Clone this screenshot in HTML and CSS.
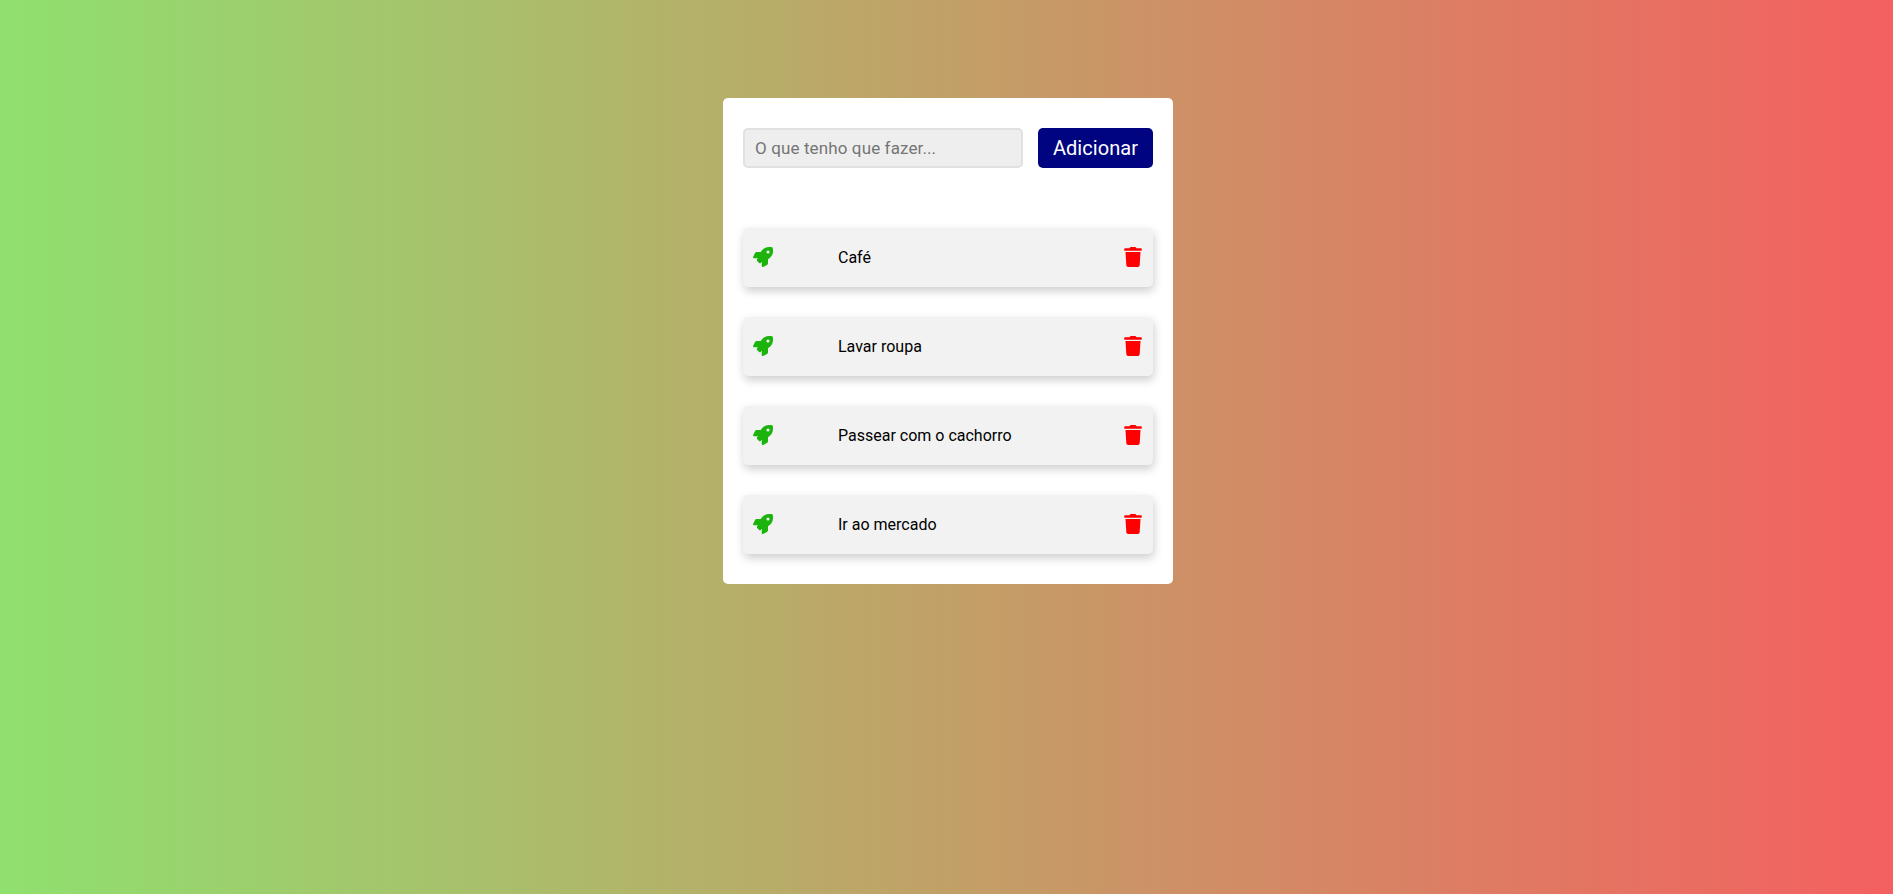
FILE: index.html
```html
<!DOCTYPE html>
<html lang="pt-BR">
<head>
<meta charset="utf-8">
<title>Lista de tarefas</title>
<link rel="stylesheet" href="styles.css">
</head>
<body>
<svg class="sprite" aria-hidden="true">
  <symbol id="rocket" viewBox="0 0 512 512"><path d="M505.12019,19.09375c-1.18945-5.53125-6.65819-11-12.207-12.1875C460.716,0,435.507,0,410.40747,0,307.17523,0,245.26909,55.20312,199.05238,128H94.83772c-16.34763.01562-35.55658,11.875-42.88664,26.48438L2.51562,253.29688A28.4,28.4,0,0,0,0,264a24.00867,24.00867,0,0,0,24.00582,24H127.81618l-22.47457,22.46875c-11.36521,11.36133-12.99607,32.25781,0,45.25L156.24582,406.625c11.15623,11.1875,32.15619,13.15625,45.27726,0l22.47457-22.46875V488a24.00867,24.00867,0,0,0,24.00581,24,28.55934,28.55934,0,0,0,10.707-2.51562l98.72834-49.39063c14.62888-7.29687,26.50776-26.5,26.50776-42.85937V312.79688c72.59753-46.3125,128.03493-108.40626,128.03493-211.09376C512.07526,76.5,512.07526,51.29688,505.12019,19.09375ZM384.04033,168A40,40,0,1,1,424.05,128,40.02322,40.02322,0,0,1,384.04033,168Z"/></symbol>
  <symbol id="trash" viewBox="0 0 448 512"><path d="M432 32H312l-9.4-18.7A24 24 0 0 0 281.1 0H166.8a23.72 23.72 0 0 0-21.4 13.3L136 32H16A16 16 0 0 0 0 48v32a16 16 0 0 0 16 16h416a16 16 0 0 0 16-16V48a16 16 0 0 0-16-16zM53.2 467a48 48 0 0 0 47.9 45h245.8a48 48 0 0 0 47.9-45L416 128H32z"/></symbol>
</svg>
<main class="card">
  <form class="entry">
    <input class="entry-input" type="text" placeholder="O que tenho que fazer...">
    <button class="entry-button" type="button">Adicionar</button>
  </form>
  <ul class="tasks">
    <li class="task"><svg class="icon rocket"><use href="#rocket"/></svg><span class="task-name">Café</span><svg class="icon trash"><use href="#trash"/></svg></li>
    <li class="task"><svg class="icon rocket"><use href="#rocket"/></svg><span class="task-name">Lavar roupa</span><svg class="icon trash"><use href="#trash"/></svg></li>
    <li class="task"><svg class="icon rocket"><use href="#rocket"/></svg><span class="task-name">Passear com o cachorro</span><svg class="icon trash"><use href="#trash"/></svg></li>
    <li class="task"><svg class="icon rocket"><use href="#rocket"/></svg><span class="task-name">Ir ao mercado</span><svg class="icon trash"><use href="#trash"/></svg></li>
  </ul>
</main>
</body>
</html>
```
FILE: styles.css
```css
* {
  margin: 0;
  padding: 0;
  box-sizing: border-box;
  font-family: Roboto, sans-serif;
}

body {
  min-height: 100vh;
  display: flex;
  justify-content: center;
  align-items: flex-start;
  padding: 98px 0 0 3px;
  background: linear-gradient(90deg, #8fe06f 0%, #f46060 100%);
}

.sprite {
  display: none;
}

.card {
  width: 450px;
  padding: 30px 20px;
  background: #fff;
  border-radius: 5px;
}

.entry {
  display: flex;
  justify-content: space-between;
  margin-bottom: 60px;
}

.entry-input {
  width: 280px;
  height: 40px;
  padding: 0 10px;
  border: 2px solid #e1e1e1;
  border-radius: 5px;
  background: #efeeee;
  font-size: 17px;
  letter-spacing: 0.12px;
}

.entry-button {
  width: 115px;
  height: 40px;
  border: 0;
  border-radius: 5px;
  background: #000480;
  color: #fff;
  font-size: 20px;
  letter-spacing: 0.06px;
}

.tasks {
  display: flex;
  flex-direction: column;
  gap: 30px;
  list-style: none;
}

.task {
  display: flex;
  align-items: center;
  height: 59px;
  padding: 0 10px;
  border-radius: 5px;
  background: #f2f2f2;
  box-shadow: 1px 4px 10px rgba(0, 0, 0, 0.2);
}

.task-name {
  flex: 1;
  margin-left: 65px;
  font-size: 16px;
}

.icon {
  width: 20px;
  height: 20px;
  margin-bottom: 1px;
}

.rocket {
  fill: #1bb30c;
}

.trash {
  fill: #f00;
}
```
